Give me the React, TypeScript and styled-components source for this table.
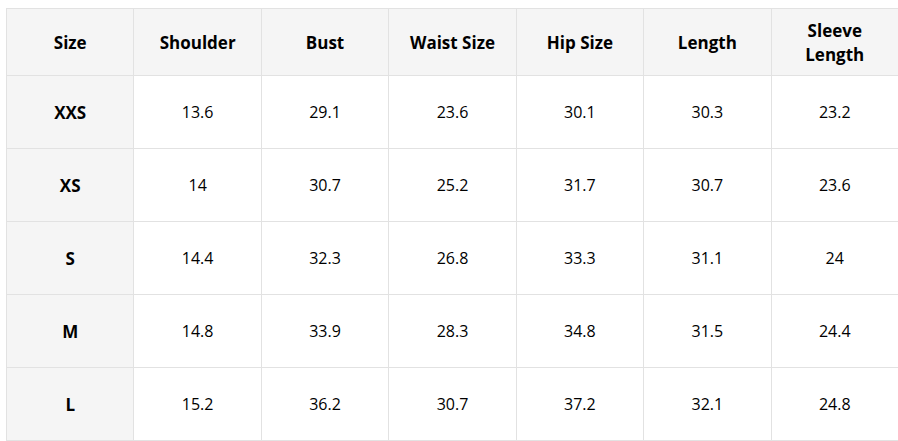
import React from 'react'
import styled, { createGlobalStyle } from 'styled-components'

const GlobalStyle = createGlobalStyle`
  html, body {
    margin: 0;
    padding: 0;
    background: #fff;
  }
  body {
    font-family: 'Open Sans', 'Noto Sans', sans-serif;
    color: #000;
    overflow: hidden;
  }
`

const Page = styled.div`
  padding: 8px 0 0 6px;
  width: 898px;
  box-sizing: border-box;
`

const Table = styled.table`
  border-collapse: collapse;
  table-layout: fixed;
  width: 893px;
  font-size: 16px;
`

const HeadCell = styled.th`
  height: 64px;
  padding: 2px 6px 0;
  background: #f5f5f5;
  border: 1px solid #e2e2e2;
  font-size: 17px;
  font-weight: 700;
  text-align: center;
  vertical-align: middle;
  line-height: 24px;
`

const Cell = styled.td<{ $label?: boolean }>`
  height: 72px;
  padding: 0 6px;
  border: 1px solid #e2e2e2;
  text-align: center;
  vertical-align: middle;
  background: ${p => (p.$label ? '#f5f5f5' : '#fff')};
  font-size: ${p => (p.$label ? '17px' : '16px')};
  font-weight: ${p => (p.$label ? 700 : 400)};
`

const headers = ['Size', 'Shoulder', 'Bust', 'Waist Size', 'Hip Size', 'Length', 'Sleeve Length']

const rows = [
  ['XXS', '13.6', '29.1', '23.6', '30.1', '30.3', '23.2'],
  ['XS', '14', '30.7', '25.2', '31.7', '30.7', '23.6'],
  ['S', '14.4', '32.3', '26.8', '33.3', '31.1', '24'],
  ['M', '14.8', '33.9', '28.3', '34.8', '31.5', '24.4'],
  ['L', '15.2', '36.2', '30.7', '37.2', '32.1', '24.8'],
]

const App: React.FC = () => (
  <Page>
    <GlobalStyle />
    <Table>
      <thead>
        <tr>
          {headers.map(h => (
            <HeadCell key={h}>{h === 'Sleeve Length' ? <>Sleeve<br />Length</> : h}</HeadCell>
          ))}
        </tr>
      </thead>
      <tbody>
        {rows.map(r => (
          <tr key={r[0]}>
            {r.map((v, i) => (
              <Cell key={i} $label={i === 0}>{v}</Cell>
            ))}
          </tr>
        ))}
      </tbody>
    </Table>
  </Page>
)

export default App
